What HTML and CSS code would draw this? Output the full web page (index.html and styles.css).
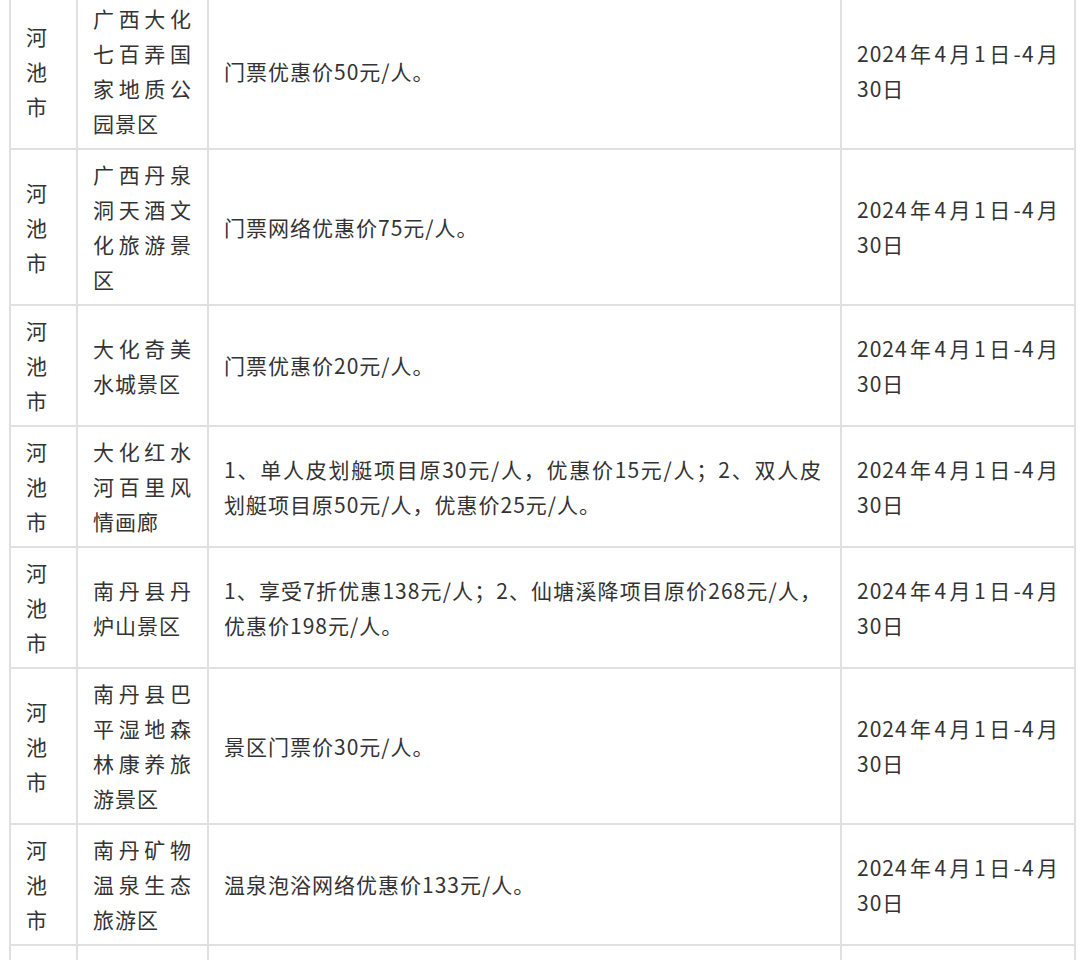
FILE: index.html
```html
<!DOCTYPE html>
<html lang="zh-CN">
<head>
<meta charset="utf-8">
<title>景区优惠</title>
<link rel="stylesheet" href="styles.css">
</head>
<body>
<div class="wrap">
<table class="deals">
<colgroup>
<col class="c-city">
<col class="c-name">
<col class="c-desc">
<col class="c-date">
</colgroup>
<tbody>
<tr><td>河池市</td><td>广西大化七百弄国家地质公园景区</td><td class="desc">门票优惠价50元/人。</td><td>2024年4月1日-4月30日</td></tr>
<tr><td>河池市</td><td>广西丹泉洞天酒文化旅游景区</td><td class="desc">门票网络优惠价75元/人。</td><td>2024年4月1日-4月30日</td></tr>
<tr><td>河池市</td><td>大化奇美水城景区</td><td class="desc">门票优惠价20元/人。</td><td>2024年4月1日-4月30日</td></tr>
<tr><td>河池市</td><td>大化红水河百里风情画廊</td><td class="desc">1、单人皮划艇项目原30元/人，优惠价15元/人；2、双人皮划艇项目原50元/人，优惠价25元/人。</td><td>2024年4月1日-4月30日</td></tr>
<tr><td>河池市</td><td>南丹县丹炉山景区</td><td class="desc">1、享受7折优惠138元/人；2、仙塘溪降项目原价268元/人，优惠价198元/人。</td><td>2024年4月1日-4月30日</td></tr>
<tr><td>河池市</td><td>南丹县巴平湿地森林康养旅游景区</td><td class="desc">景区门票价30元/人。</td><td>2024年4月1日-4月30日</td></tr>
<tr><td>河池市</td><td>南丹矿物温泉生态旅游区</td><td class="desc">温泉泡浴网络优惠价133元/人。</td><td>2024年4月1日-4月30日</td></tr>
<tr class="tail"><td></td><td></td><td></td><td></td></tr>
</tbody>
</table>
</div>
</body>
</html>
```

FILE: styles.css
```css
html, body {
  margin: 0;
  padding: 0;
  background: #ffffff;
}

.wrap {
  padding: 0 7px 0 9px;
  margin-top: -8px;
}

.deals {
  border-collapse: collapse;
  table-layout: fixed;
  width: 1065px;
  font-family: "Noto Sans CJK SC", "Noto Sans", sans-serif;
  font-size: 21px;
  letter-spacing: 1px;
  line-height: 35px;
  color: #333333;
}

.c-city { width: 67px; }
.c-name { width: 131px; }
.c-desc { width: 633px; }
.c-date { width: 234px; }

.deals td {
  border: 2px solid #e0e0e0;
  padding: 7px 15px;
  vertical-align: middle;
  text-align: justify;
  word-break: normal;
  line-break: normal;
}

.deals td.desc {
  padding-right: 18px;
}

.deals .tail td {
  height: 120px;
}
```
